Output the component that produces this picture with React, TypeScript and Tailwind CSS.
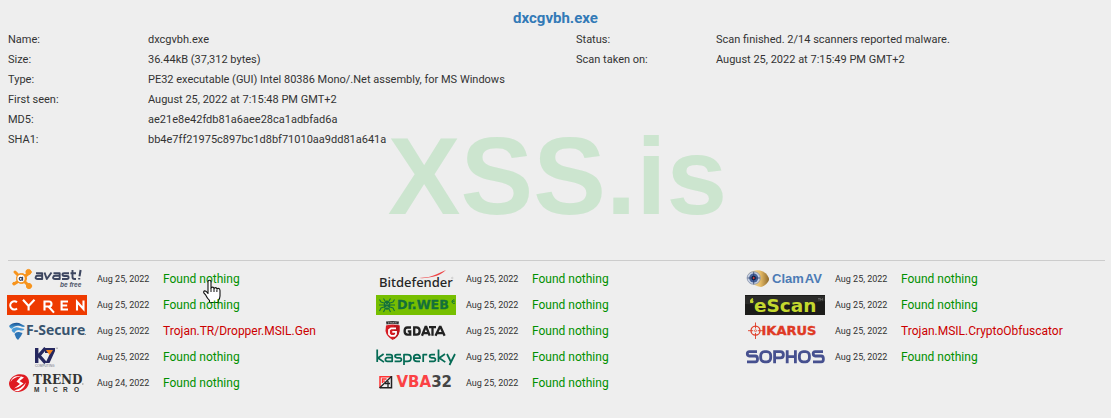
import type { ReactNode } from "react";

const fileInfo = [
  ["Name:", "dxcgvbh.exe"],
  ["Size:", "36.44kB (37,312 bytes)"],
  ["Type:", "PE32 executable (GUI) Intel 80386 Mono/.Net assembly, for MS Windows"],
  ["First seen:", "August 25, 2022 at 7:15:48 PM GMT+2"],
  ["MD5:", "ae21e8e42fdb81a6aee28ca1adbfad6a"],
  ["SHA1:", "bb4e7ff21975c897bc1d8bf71010aa9dd81a641a"],
];

const scanInfo = [
  ["Status:", "Scan finished. 2/14 scanners reported malware."],
  ["Scan taken on:", "August 25, 2022 at 7:15:49 PM GMT+2"],
];

function Logo({ name, children }: { name: string; children: ReactNode }) {
  return (
    <svg role="img" aria-label={name} viewBox="0 0 80 20" className="h-5 w-20 shrink-0 overflow-visible">
      {children}
    </svg>
  );
}

const sans = "'Liberation Sans', sans-serif";

const Avast = () => (
  <Logo name="Avast">
    <g fill="#f7941d" stroke="#f7941d" strokeLinecap="round">
      <path d="M15 10 8 3M15 10 23 3M15 10 7 15M15 10 22 17" strokeWidth="3" fill="none" />
      <circle cx="21.5" cy="3" r="2.6" />
      <circle cx="22" cy="17" r="2.6" />
      <circle cx="7" cy="14.5" r="1.2" />
      <circle cx="14.5" cy="9.5" r="5" />
    </g>
    <circle cx="14" cy="9.5" r="3.7" fill="#fff" />
    <circle cx="13.7" cy="9.8" r="1.5" fill="none" stroke="#34405c" strokeWidth="1.2" />
    <path d="M15.6 7.8v4" stroke="#34405c" strokeWidth="1.1" />
    <g fill="none" stroke="#3d4660" strokeWidth="1.9" strokeLinejoin="round">
      <path d="M29 4.2h6.2V10h-4.6q-2.2 0-2-1.7.2-1.5 2.2-1.5h4" />
      <path d="M37.5 3.5 39.8 10 44.5 3.5" />
      <path d="M46.5 4.2h6.2V10h-4.6q-2.2 0-2-1.7.2-1.5 2.2-1.5h4" />
      <path d="M62 4.2h-5q-1.6 0-1.6 1.3T57 7h3q1.6 0 1.6 1.5T60 10h-5" />
      <path d="M65.5 1v7q0 2 2 2h1.5M63.5 4.2h5.5" />
      <path d="M73.6 1 72.5 7.4M72.2 9v1.6" strokeWidth="2.1" />
    </g>
    <text x="53" y="18" fontFamily={sans} fontSize="6.5" fontStyle="italic" fontWeight="bold" fill="#4c5468">be free</text>
  </Logo>
);

const Cyren = () => (
  <Logo name="Cyren">
    <rect width="80" height="20" fill="#ee3a00" />
    <g fill="none" stroke="#fff" strokeWidth="2.1">
      <path d="M10 7.2A4.1 4.1 0 1 0 10 13.5" />
      <path d="M16 4.8 21.6 11M27.5 4.8 21.6 11V15.4" />
      <path d="M37.5 15.4V6.5h4.5a2.5 2.5 0 0 1 0 5h-4M41.5 11.5 47 17.6" />
      <path d="M61 6.5h-6.4v8H61M54.6 10.5h5.6" />
      <path d="M70 15.4V6.8L76.5 14V5.4" />
    </g>
  </Logo>
);

const FSecure = () => (
  <Logo name="F-Secure">
    <defs>
      <linearGradient id="fsBlue" x2="0" y2="1">
        <stop stopColor="#174f91" />
        <stop offset="1" stopColor="#54b2e8" />
      </linearGradient>
    </defs>
    <path d="M2 5Q6 1 12 2L18 5Q17 7 13 5 8 4 5 8Q3 8 2 5Z" fill="url(#fsBlue)" />
    <path d="M4.5 9Q7 5 13 7l4.5 1Q16 10.5 12 9 8.5 9 7.5 12 5.5 12 4.5 9Z" fill="#4899d6" />
    <path d="M7.5 13Q9 10.5 12 11l3.5 1Q14.5 15 11 19 8.5 17 7.5 13Z" fill="#2d74b5" />
    <text x="19" y="14" fontFamily="'Open Sans', sans-serif" fontSize="14" fontWeight="700" fill="#38546f">F-Secure</text>
    <path d="M77.5 13.5h1.5" stroke="#777" strokeWidth=".8" />
  </Logo>
);

const K7 = () => (
  <Logo name="K7 Computing">
    <path d="M29.7 1v15M38.5 1 32 8.5 38.5 16" fill="none" stroke="#25275e" strokeWidth="3.4" />
    <path d="M38 1h10v3L42.5 16h-4l4.8-10H38Z" fill="#25275e" />
    <path d="M39 3h7l-3.5 5Z" fill="#f6851f" />
    <path d="M48.8 1.2H51" stroke="#888" strokeWidth=".7" />
    <text x="28" y="19.7" fontFamily={sans} fontSize="3.2" fill="#6b6e80">COMPUTING</text>
  </Logo>
);

const TrendMicro = () => (
  <Logo name="Trend Micro">
    <path d="M12 1.3C18 .5 22 4 22 9.5 21 15.5 16 19 11 19 5 18.5 2 14.5 2 10 3 5 7 2 12 1.3Z" fill="#df1b22" />
    <path d="M3.5 9Q7 3.5 14 3.5L9.5 8.5 13 11 7 15.5Q12 14.5 16.5 10.5L12.5 8 17 4.5Q13 2 8 3.5 4.5 5 3.5 9Z" fill="#fff" />
    <path d="M7 17.5q8-2 12-8-2 7-8 8.7Z" fill="#fff" />
    <text x="26" y="11.3" fontFamily="'DejaVu Serif', serif" fontSize="12" fontWeight="bold" fill="#333">TREND</text>
    <text x="27 38 46 56 67" y="18.8" fontFamily={sans} fontSize="6.5" fontWeight="bold" fill="#333">MICRO</text>
    <path d="M75 11h1.5" stroke="#777" strokeWidth=".8" />
  </Logo>
);

const Bitdefender = () => (
  <Logo name="Bitdefender">
    <text x="3" y="17.5" fontFamily="'Noto Sans', sans-serif" fontSize="13" fontWeight="500" fill="#252525">Bitdefender</text>
    <path d="M43 9Q54 8.5 60 5.5T70 1Q65 6 57 7.8T43 9Z" fill="#ee4547" />
    <circle cx="76.3" cy="9" r=".8" fill="none" stroke="#aaa" strokeWidth=".4" />
  </Logo>
);

const DrWeb = () => (
  <Logo name="Dr.Web">
    <rect width="80" height="20" fill="#76bf00" />
    <g fill="none" stroke="#14703a" strokeWidth="1.1">
      <path d="M8 8 5 7 3.5 4.5M8 10H3M8 12l-3 1-1.5 3M14 8l3-1 1.5-2.5M14 10h5M14 12l3 1 1.5 3M9 6 7.5 3.5M13 6l1.5-2.5M9 14l-1.5 3M13 14l1.5 3" />
    </g>
    <ellipse cx="11" cy="10.2" rx="3.2" ry="4.6" fill="#14703a" />
    <path d="M9 8.5l1.5.8M13 8.5l-1.5.8M9.5 12.5Q11 11 12.5 12.5" stroke="#8ecb36" strokeWidth=".8" fill="none" />
    <text x="21" y="14.3" fontFamily="'DejaVu Sans', sans-serif" fontSize="12.6" fontWeight="bold" fill="#14703a" stroke="#14703a" strokeWidth=".3">Dr.WEB</text>
    <path d="M78.5 5A1.8 1.8 0 1 0 79 8M76.5 6.3h2.2" fill="none" stroke="#14703a" strokeWidth="1" />
  </Logo>
);

const GData = () => (
  <Logo name="G Data">
    <path d="M10 4.5Q16.5 2.5 23.5 4.5V10Q23 15.5 16.7 19 10.5 15.5 9.5 10Z" fill="#d61c24" />
    <path d="M18 4v14.3Q23 15 23.5 10V4.5Z" fill="#b9151d" />
    <path d="M10 .5Q16.5-.5 23 .5L22.5 3.5Q16.5 2 10.5 3.5Z" fill="#333" />
    <path d="M12 2q4.5-.8 9 0" fill="none" stroke="#ddd" strokeWidth=".8" strokeDasharray="1 .7" />
    <path d="M20 7.4h-5L13 9v4l2 1.8h3.7L20 13v-2.2h-3.7" fill="none" stroke="#fff" strokeWidth="1.8" />
    <g fill="none" stroke="#222" strokeWidth="2.3">
      <path d="M35 6.5h-3.6q-2.8 0-2.8 3.6t2.8 3.6h2.8v-3.3h-2.4" />
      <path d="M38.2 6.3v7.4h2.2q3.3 0 3.3-3.7t-3.3-3.7Z" />
      <path d="M46 14.7 49.5 6h.8l3.4 8.7M47.5 12.2h5" />
      <path d="M53 6.2h7M56.5 6.2v8.5" />
      <path d="M59.5 14.7 63.8 6h.8l4 8.7M61.5 12.2h5.2" />
    </g>
  </Logo>
);

const Kaspersky = () => (
  <Logo name="Kaspersky">
    <g fill="none" stroke="#056b55" strokeWidth="1.75" strokeLinejoin="round">
      <path d="M1.2 2.5v12.6M7.6 7 2 11l6 4.1" />
      <path d="M10 7.5h4.2q2 0 2 2v4.8h-4.8q-2 0-2-1.8t2-1.8h4.8" />
      <path d="M25 7.5h-4q-2 0-2 1.6t2 1.7h2.4q2 0 2 1.8t-2 1.7h-4.8" />
      <path d="M28 18V7.5h3.5q3.5 0 3.5 3.4t-3.5 3.4H28" />
      <path d="M44 14.3h-3q-3.3 0-3.3-3.4t3.3-3.4q3.1 0 3.1 3.7h-6.2" />
      <path d="M47.2 15.1V7.5h4" />
      <path d="M59 7.5h-3.4q-2 0-2 1.6t2 1.7h1.8q2 0 2 1.8t-2 1.7H53" />
      <path d="M62.5 2.5v12.6M69 7 63.3 11l6 4.1" />
      <path d="M71 7l3.7 7.5M79 7l-5.5 11" />
    </g>
  </Logo>
);

const Vba32 = () => (
  <Logo name="VBA32">
    <path d="M4 15V3.7h11.5" fill="none" stroke="#f33" strokeWidth="1.5" />
    <path d="M15.5 3v11.8H4" fill="none" stroke="#222" strokeWidth="1.5" />
    <path d="M3.5 15 15.5 3.5M9 10.5h5M12 8v6" fill="none" stroke="#222" strokeWidth="1.3" />
    <path d="M6.5 10V6h4M6.5 8.2H9" fill="none" stroke="#f33" strokeWidth="1.3" />
    <text x="20.5" y="14.4" fontFamily="'DejaVu Sans', sans-serif" fontSize="15" fontWeight="bold" fill="#fb4245">
      VBA<tspan fill="#454545">32</tspan>
    </text>
  </Logo>
);

const ClamAV = () => (
  <Logo name="ClamAV">
    <defs>
      <linearGradient id="clamShell">
        <stop stopColor="#fff0bf" />
        <stop offset=".6" stopColor="#e3b965" />
        <stop offset="1" stopColor="#8f6a2c" />
      </linearGradient>
    </defs>
    <path d="M3 5Q10-1 18 2.5 24 6 24 11 22 16 16 18 9 17 4 12Z" fill="url(#clamShell)" />
    <ellipse cx="8.7" cy="9" rx="6.6" ry="6.3" fill="#c9d2e2" stroke="#7886a5" strokeWidth=".7" />
    <circle cx="8.7" cy="9" r="4.5" fill="#45629b" />
    <circle cx="8.7" cy="9" r="2.3" fill="#121c38" />
    <path d="M8.7 2.8v12.5M2.5 9H15" stroke="#27365d" strokeWidth=".7" />
    <circle cx="8.7" cy="9" r=".9" fill="#ee3a36" />
    <text x="27" y="14" fontFamily={sans} fontSize="13" fontWeight="bold" fill="#4c7bb5">Clam<tspan dx="1">AV</tspan></text>
  </Logo>
);

const EScan = () => (
  <Logo name="eScan">
    <rect width="80" height="20" fill="#1c1c1a" />
    <path d="M0 1h80v5Q40 12 0 9Z" fill="#2b2b29" />
    <path d="M7.5 3.5Q5 4 5.5 7.5H8V5.8H7Q7 4.8 8 4.3Z" fill="#c4d82e" stroke="#c4d82e" />
    <text x="9" y="16.5" fontFamily="'DejaVu Sans', sans-serif" fontSize="18.5" fontWeight="bold" fill="#c4d82e">eScan</text>
    <path d="M73 3.5h2M74 3.5v2M75.5 5.5v-2l1 1 1-1v2" fill="none" stroke="#888" strokeWidth=".5" />
  </Logo>
);

const Ikarus = () => (
  <Logo name="Ikarus">
    <g fill="none" stroke="#df3a24">
      <circle cx="10.5" cy="9.7" r="4.5" strokeWidth="1.3" />
      <path d="M10.5 1.5v6M10.5 12v6M3 9.7h5.2M12.8 9.7H18" strokeWidth=".9" />
      <circle cx="10.5" cy="9.7" r="1" strokeWidth=".7" />
    </g>
    <text x="16.5" y="14.3" fontFamily="'DejaVu Sans', sans-serif" fontSize="13" fontWeight="bold" fill="#df3a24" stroke="#df3a24" strokeWidth=".4">IKARUS</text>
  </Logo>
);

const Sophos = () => (
  <Logo name="Sophos">
    <g fill="none" stroke="#46508f" strokeWidth="2.8">
      <path d="M12 4.7H4.3Q2.3 4.7 2.3 6.8T4.3 9h6q2.2 0 2.2 2.9t-2.2 2.9H2" />
      <rect x="15.7" y="4.7" width="10" height="10.1" rx="3.8" />
      <path d="M29.6 16.2V4.7h5.8q3 0 3 3.1t-3 3.1h-5.8" />
      <path d="M42.2 3.3v12.9M50.4 3.3v12.9M42.2 9.6h8.2" />
      <rect x="54.4" y="4.7" width="10" height="10.1" rx="3.8" />
      <path d="M78 4.7h-7.8q-2 0-2 2.1T70.2 9h6q2.2 0 2.2 2.9t-2.2 2.9H68" />
    </g>
  </Logo>
);

type Result = { logo: ReactNode; date: string; result: string; bad?: boolean };

const clean = "Found nothing";
const aug25 = "Aug 25, 2022";

const columns: Result[][] = [
  [
    { logo: <Avast />, date: aug25, result: clean },
    { logo: <Cyren />, date: aug25, result: clean },
    { logo: <FSecure />, date: aug25, result: "Trojan.TR/Dropper.MSIL.Gen", bad: true },
    { logo: <K7 />, date: aug25, result: clean },
    { logo: <TrendMicro />, date: "Aug 24, 2022", result: clean },
  ],
  [
    { logo: <Bitdefender />, date: aug25, result: clean },
    { logo: <DrWeb />, date: aug25, result: clean },
    { logo: <GData />, date: aug25, result: clean },
    { logo: <Kaspersky />, date: aug25, result: clean },
    { logo: <Vba32 />, date: aug25, result: clean },
  ],
  [
    { logo: <ClamAV />, date: aug25, result: clean },
    { logo: <EScan />, date: aug25, result: clean },
    { logo: <Ikarus />, date: aug25, result: "Trojan.MSIL.CryptoObfuscator", bad: true },
    { logo: <Sophos />, date: aug25, result: clean },
  ],
];

function InfoList({ rows }: { rows: string[][] }) {
  return (
    <dl>
      {rows.map(([label, value]) => (
        <div key={label} className="flex">
          <dt className="w-[140px] shrink-0">{label}</dt>
          <dd>{value}</dd>
        </div>
      ))}
    </dl>
  );
}

function HandPointer() {
  return (
    <svg viewBox="0 0 19 25" className="pointer-events-none absolute top-2 left-10 h-[25px] w-[19px]" aria-hidden="true">
      <path
        d="M5 14.5V3Q5 1.2 6.5 1.2T8 3v6.5q.2-1.4 1.5-1.4T11 9.8q.3-1.2 1.5-1.2t1.4 1.7q.3-.9 1.4-.9 1.7 0 1.7 2V17q0 2.5-1.7 4.3V23.5H6.5v-2.2Q4 19 2.8 16.2L.8 13.8q-.5-1.6 1-1.9 1.2-.2 3.2 2.6Z"
        fill="#fff"
        stroke="#111"
        strokeWidth="1.1"
        strokeLinejoin="round"
      />
      <path d="M8 9.5V13M11 10v3M13.9 11v2" stroke="#111" fill="none" />
    </svg>
  );
}

export default function App() {
  return (
    <main className="min-h-screen bg-[#eeeeee] pt-2 font-[Roboto,sans-serif] text-[#333333]">
      <h1 className="text-center text-[15px] leading-5 font-bold">
        <a href="#report" className="text-[#337ab7]">dxcgvbh.exe</a>
      </h1>

      <section id="report" className="relative min-h-[232px] pt-0.5 pl-2 text-[11px] leading-5">
        <div aria-hidden="true" className="absolute inset-x-0 top-[88px] pl-1 text-center font-['Liberation_Sans',sans-serif] text-[109px] leading-[120px] font-bold text-[#cce5cf]">
          XSS.is
        </div>
        <div className="relative grid grid-cols-[568fr_535fr]">
          <InfoList rows={fileInfo} />
          <InfoList rows={scanInfo} />
        </div>
      </section>

      <hr className="mr-1.5 ml-2 border-[#cccccc]" />

      <section className="grid grid-cols-[369fr_369fr_366fr] pt-[5px] pl-[7px]">
        {columns.map((column, c) => (
          <ul key={c}>
            {column.map((row, r) => (
              <li key={r} className="flex h-[26px] items-center gap-2.5">
                {row.logo}
                <time className="w-14 shrink-0 text-[9px] leading-4">{row.date}</time>
                <span className={row.bad ? "text-xs text-[#cc0000]" : "relative text-xs text-[#009000]"}>
                  {row.result}
                  {c === 0 && r === 0 && <HandPointer />}
                </span>
              </li>
            ))}
          </ul>
        ))}
      </section>
    </main>
  );
}
